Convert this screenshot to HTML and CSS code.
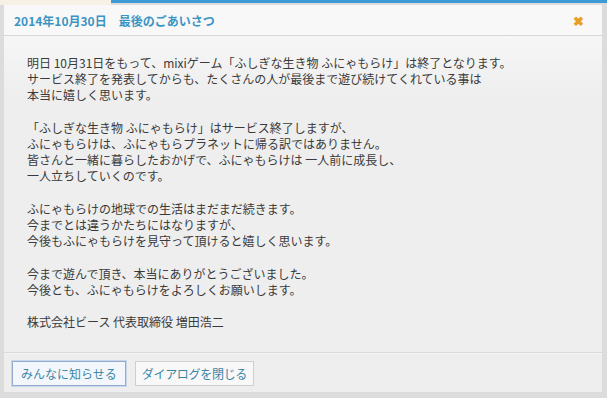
FILE: index.html
```html
<!DOCTYPE html>
<html lang="ja">
<head>
    <meta charset="UTF-8">
    <meta name="viewport" content="width=device-width, initial-scale=1.0">
    <title>最後のごあいさつ</title>
    <link rel="stylesheet" href="styles.css">
</head>
<body>
    <div class="topbar">
        <div class="topbar-left"></div>
        <div class="topbar-right"></div>
    </div>
    <div class="dialog">
        <div class="dialog-header">
            <span class="dialog-title">2014年10月30日　最後のごあいさつ</span>
            <span class="dialog-close">&#10006;</span>
        </div>
        <div class="dialog-body">
            <p>明日 10月31日をもって、mixiゲーム「ふしぎな生き物 ふにゃもらけ」は終了となります。<br>
            サービス終了を発表してからも、たくさんの人が最後まで遊び続けてくれている事は<br>
            本当に嬉しく思います。</p>
            <p>「ふしぎな生き物 ふにゃもらけ」はサービス終了しますが、<br>
            ふにゃもらけは、ふにゃもらプラネットに帰る訳ではありません。<br>
            皆さんと一緒に暮らしたおかげで、ふにゃもらけは 一人前に成長し、<br>
            一人立ちしていくのです。</p>
            <p>ふにゃもらけの地球での生活はまだまだ続きます。<br>
            今までとは違うかたちにはなりますが、<br>
            今後もふにゃもらけを見守って頂けると嬉しく思います。</p>
            <p>今まで遊んで頂き、本当にありがとうございました。<br>
            今後とも、ふにゃもらけをよろしくお願いします。</p>
            <p>株式会社ビース 代表取締役 増田浩二</p>
        </div>
        <div class="dialog-footer">
            <button class="btn btn-primary">みんなに知らせる</button>
            <button class="btn btn-close">ダイアログを閉じる</button>
        </div>
    </div>
</body>
</html>
```

FILE: styles.css
```css
body {
    margin: 0;
    background-color: #dcdcdc;
    font-family: "Noto Sans CJK JP", "Liberation Sans", sans-serif;
    font-size: 12px;
    color: #3a3a3a;
}
.topbar {
    display: flex;
    height: 5px;
}
.topbar-left {
    width: 111px;
    background-color: #f6f1e4;
}
.topbar-right {
    flex: 1;
    border-top: 3px solid #3d9ad6;
}
.dialog {
    margin: 0 5px 0 4px;
    height: 387px;
    display: flex;
    flex-direction: column;
    background-color: #eeeeee;
}
.dialog-header {
    height: 30px;
    display: flex;
    align-items: center;
    justify-content: space-between;
    padding: 0 18px 0 10px;
    background-color: #f8f8f8;
    border-bottom: 1px solid #d6d6d6;
}
.dialog-title {
    color: #3b94c4;
    font-weight: bold;
    font-size: 12px;
}
.dialog-close {
    color: #e8a024;
    font-size: 13px;
    font-weight: bold;
}
.dialog-body {
    flex: 1;
    padding: 19px 23px 0;
    line-height: 16.2px;
    background: linear-gradient(#f6f6f6, #eeeeee 60px);
}
.dialog-body p {
    margin: 0 0 16.2px;
}
.dialog-footer {
    height: 38px;
    display: flex;
    align-items: center;
    gap: 9px;
    padding: 1px 8px 0;
    border-top: 1px solid #dadada;
    box-shadow: inset 0 1px 0 #f4f4f4;
}
.btn {
    height: 25px;
    padding: 0 9px;
    font-family: "Noto Sans CJK JP", "Liberation Sans", sans-serif;
    font-size: 12px;
    color: #3a86a8;
    background-color: #f8f8f8;
    border: 1px solid #cfcfcf;
}
.btn-primary {
    padding: 0 8px;
    background-color: #f3f7fb;
    border-color: #93acd0;
    box-shadow: 0 0 0 1px #c9d7ea;
}
.btn-close {
    padding: 0 6px;
    letter-spacing: -0.3px;
}
```
